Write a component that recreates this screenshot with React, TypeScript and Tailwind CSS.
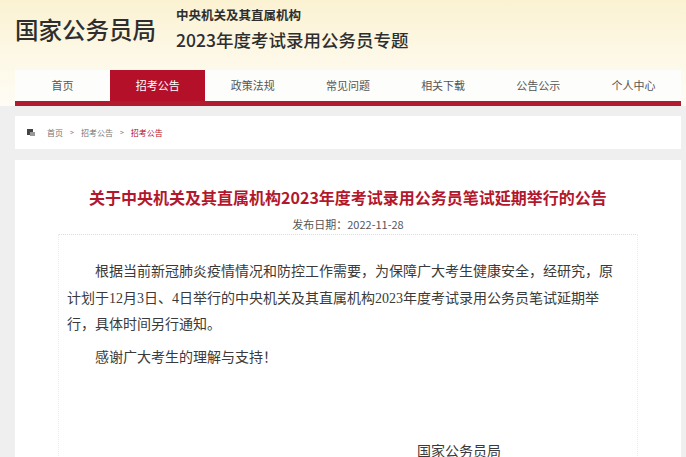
import React from "react";

const navItems = ["首页", "招考公告", "政策法规", "常见问题", "相关下载", "公告公示", "个人中心"];

export default function App() {
  const sans = { fontFamily: '"Noto Sans CJK SC", "Noto Sans", sans-serif' };
  return (
    <div
      className="w-[686px] h-[457px] overflow-hidden bg-[#efefef] flex flex-col"
      style={sans}
    >
      {/* Header */}
      <div className="shrink-0 bg-gradient-to-b from-[#fbf2d2] via-[#fdf8e6] to-[#fefcf4] pl-[15px] pr-[5px]">
        <div className="h-[70px] flex items-start pt-[4px]">
          <div className="text-[23.5px] leading-none font-medium text-[#2e2e2e] mt-[14px]">
            国家公务员局
          </div>
          <div className="ml-[20px] flex flex-col">
            <div className="text-[12.5px] leading-[16px] font-bold text-[#2e2e2e] mt-[3px]">
              中央机关及其直属机构
            </div>
            <div className="text-[17.5px] leading-[22px] font-medium text-[#2e2e2e] mt-[6px]">
              2023年度考试录用公务员专题
            </div>
          </div>
        </div>
        <div className="grid grid-cols-7 h-[31px] bg-[#fdfdfb]">
          {navItems.map((n, i) => (
            <div
              key={n}
              className={
                i === 1
                  ? "flex items-center justify-center bg-[#b5102a] text-white text-[11px]"
                  : "flex items-center justify-center text-[#555] text-[11px]"
              }
            >
              {n}
            </div>
          ))}
        </div>
        <div className="h-[5px] bg-[#b11b30]" />
      </div>

      {/* Breadcrumb */}
      <div className="shrink-0 ml-[15px] mr-[5px] mt-[10px] h-[33px] bg-white flex items-center pl-[12px] text-[8px] text-[#777] gap-[5px]">
        <span className="relative w-[8px] h-[7px] mr-[7px]">
          <span className="absolute left-0 top-0 w-[6px] h-[6px] bg-[#444]" />
          <span className="absolute left-[3px] top-[3px] w-[5px] h-[4px] bg-[#999]" />
        </span>
        <span>首页</span>
        <span className="text-[7px] mx-[2px]">&gt;</span>
        <span>招考公告</span>
        <span className="text-[7px] mx-[2px]">&gt;</span>
        <span className="text-[#b5102a]">招考公告</span>
      </div>

      {/* Content */}
      <div className="shrink-0 ml-[15px] mr-[5px] mt-[11px] bg-white flex-1 flex flex-col">
        <div className="pt-[26px] text-center text-[16px] leading-[22px] font-bold text-[#b3172c]">
          关于中央机关及其直属机构2023年度考试录用公务员笔试延期举行的公告
        </div>
        <div className="mt-[8px] text-center text-[11px] leading-[16px] text-[#555]">
          发布日期：2022-11-28
        </div>
        <div className="mx-[43px] mt-[2px] flex-1 border-x border-[#ececec] border-t border-t-[#dcdcdc] border-dotted pl-[8px] pr-[18px] pt-[24px]">
          <div
            className="text-[14px] leading-[26.5px] text-[#3a3a3a]"
            style={{ fontFamily: '"Liberation Serif", "Noto Sans CJK SC", serif' }}
          >
            <p className="indent-[2em]">
              根据当前新冠肺炎疫情情况和防控工作需要，为保障广大考生健康安全，经研究，原计划于12月3日、4日举行的中央机关及其直属机构2023年度考试录用公务员笔试延期举行，具体时间另行通知。
            </p>
            <p className="indent-[2em] mt-[6px]">感谢广大考生的理解与支持！</p>
            <div className="mt-[68px] pl-[350px]">国家公务员局</div>
          </div>
        </div>
      </div>
    </div>
  );
}
